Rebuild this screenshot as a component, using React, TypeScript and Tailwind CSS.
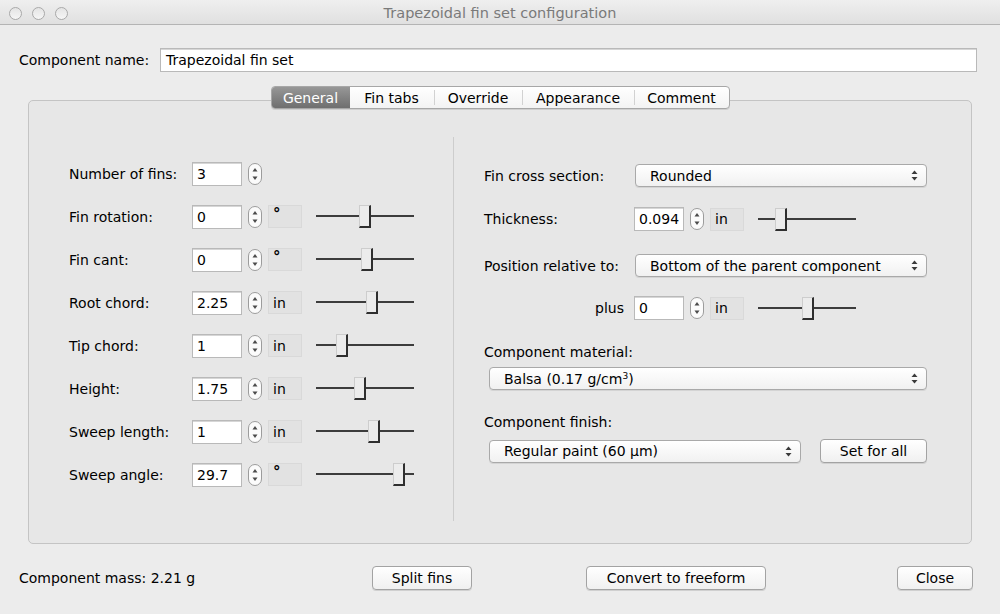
import React from "react";

const font = { fontFamily: '"DejaVu Sans", "Liberation Sans", sans-serif' };

type Row = { label: string; value: string; unit?: string; thumb?: number };

const finRows: Row[] = [
  { label: "Number of fins:", value: "3" },
  { label: "Fin rotation:", value: "0", unit: "°", thumb: 43 },
  { label: "Fin cant:", value: "0", unit: "°", thumb: 45 },
  { label: "Root chord:", value: "2.25", unit: "in", thumb: 50 },
  { label: "Tip chord:", value: "1", unit: "in", thumb: 20 },
  { label: "Height:", value: "1.75", unit: "in", thumb: 38 },
  { label: "Sweep length:", value: "1", unit: "in", thumb: 52 },
  { label: "Sweep angle:", value: "29.7", unit: "°", thumb: 77 },
];

const TextBox = ({ value, className = "" }: { value: string; className?: string }) => (
  <div
    className={`h-[24px] bg-white border border-[#b9b9b9] shadow-[inset_0_1px_0_#d6d6d6] flex items-center pl-[4px] pt-[1px] text-[14px] text-black ${className}`}
  >
    {value}
  </div>
);

const Spinner = () => (
  <svg width="14" height="22" viewBox="0 0 14 22" className="shrink-0">
    <rect x="0.5" y="0.5" width="13" height="21" rx="6.5" fill="#fbfbfb" stroke="#9c9c9c" />
    <path d="M7 5 L9.5 8.5 H4.5 Z" fill="#4a4a4a" />
    <path d="M7 17 L9.5 13.5 H4.5 Z" fill="#4a4a4a" />
  </svg>
);

const Unit = ({ unit }: { unit: string }) => (
  <div className="w-[34px] h-[23px] bg-[#e2e2e2] border border-[#d9d9d9] flex items-center pl-[4px] pt-[1px] text-[14px] text-black shrink-0">
    {unit === "°" ? <span className="text-[15px] -mt-[5px] font-bold">°</span> : unit}
  </div>
);

const Slider = ({ thumb }: { thumb: number }) => (
  <div className="relative w-[98px] h-[23px] shrink-0">
    <div className="absolute left-0 right-0 top-[10px] h-[2px] bg-[#3c3c3c]" />
    <div
      className="absolute top-0 w-[12px] h-[23px] bg-[#ececec] border-t border-l border-[#cdcdcd] border-r-2 border-b-2 border-r-[#2f2f2f] border-b-[#2f2f2f]"
      style={{ left: thumb }}
    />
  </div>
);

const Arrows = () => (
  <svg width="7" height="11" viewBox="0 0 7 11" className="shrink-0">
    <path d="M3.5 0.5 L6.5 4 H0.5 Z" fill="#3a3a3a" />
    <path d="M3.5 10.5 L6.5 7 H0.5 Z" fill="#3a3a3a" />
  </svg>
);

const Select = ({ value, className = "" }: { value: React.ReactNode; className?: string }) => (
  <div
    className={`h-[23px] rounded-[4px] border border-[#a9a9a9] bg-gradient-to-b from-white to-[#f1f1f1] shadow-[0_1px_0_#d4d4d4] flex items-center justify-between pl-[14px] pr-[8px] text-[14px] text-black ${className}`}
  >
    <span className="pt-[1px]">{value}</span>
    <Arrows />
  </div>
);

const Button = ({ label, className = "" }: { label: string; className?: string }) => (
  <div
    className={`h-[24px] rounded-[4px] border border-[#a3a3a3] bg-gradient-to-b from-white to-[#f0f0f0] shadow-[0_1px_0_#d0d0d0] flex items-center justify-center text-[14px] text-black ${className}`}
  >
    {label}
  </div>
);

const Light = () => (
  <div className="w-[13px] h-[13px] rounded-full border border-[#a9a9a9] bg-gradient-to-b from-[#e4e4e4] to-[#f6f6f6]" />
);

const tabs = [
  { name: "General", w: "w-[78px]" },
  { name: "Fin tabs", w: "w-[84px]" },
  { name: "Override", w: "w-[88px]" },
  { name: "Appearance", w: "w-[112px]" },
  { name: "Comment", w: "w-[95px]" },
];

export default function App() {
  return (
    <div className="w-[1000px] h-[614px] bg-[#ececec] flex flex-col overflow-hidden" style={font}>
      {/* title bar */}
      <div className="h-[25px] shrink-0 flex items-center pt-[2px] bg-gradient-to-b from-[#efefef] to-[#e0e0e0] border-b border-[#b4b4b4] relative">
        <div className="flex items-center gap-[10px] pl-[9px]">
          <Light />
          <Light />
          <Light />
        </div>
        <div className="absolute inset-0 flex items-center justify-center pt-[3px] text-[14.5px] text-[#7a7a7a]">
          Trapezoidal fin set configuration
        </div>
      </div>

      {/* component name */}
      <div className="flex items-center mt-[23px] pl-[19px] pr-[23px]">
        <span className="w-[141px] pt-[1px] text-[14px] text-black">Component name:</span>
        <TextBox value="Trapezoidal fin set" className="flex-1 pl-[5px]" />
      </div>

      {/* tabs */}
      <div className="relative z-10 flex justify-center mt-[14px]">
        <div className="flex h-[23px] rounded-[4px] border border-[#a7a7a7] bg-gradient-to-b from-white to-[#f3f3f3] overflow-hidden shadow-[0_1px_0_#cfcfcf]">
          {tabs.map((t, i) =>
            i === 0 ? (
              <div
                key={t.name}
                className={`${t.w} flex items-center justify-center pt-[1px] text-[14px] text-white bg-gradient-to-b from-[#979797] to-[#6f6f6f]`}
              >
                {t.name}
              </div>
            ) : (
              <div key={t.name} className={`${t.w} flex items-center`}>
                {i > 1 && <div className="w-px h-[15px] bg-[#d2d2d2]" />}
                <span className="flex-1 text-center pt-[1px] text-[14px] text-black">{t.name}</span>
              </div>
            )
          )}
        </div>
      </div>

      {/* panel */}
      <div className="mx-[28px] w-[944px] -mt-[9px] h-[444px] rounded-[5px] border border-[#c4c4c4] bg-[#e7e7e7] pt-[36px] shrink-0">
        <div className="flex h-[384px]">
          {/* left */}
          <div className="w-[424px] pl-[40px] pt-[15px]">
            {finRows.map((r) => (
              <div key={r.label} className="h-[43px] flex items-center">
                <span className="w-[123px] pt-[1px] text-[14px] text-black">{r.label}</span>
                <TextBox value={r.value} className="w-[50px] shrink-0" />
                <div className="ml-[6px]">
                  <Spinner />
                </div>
                {r.unit && (
                  <>
                    <div className="ml-[6px]">
                      <Unit unit={r.unit} />
                    </div>
                    <div className="ml-[14px]">
                      <Slider thumb={r.thumb ?? 0} />
                    </div>
                  </>
                )}
              </div>
            ))}
          </div>

          {/* right */}
          <div className="flex-1 border-l border-[#cdcdcd] pl-[30px] pr-[44px] flex flex-col text-[14px] text-black">
            <div className="mt-[27px] flex items-center">
              <span className="w-[151px] pt-[1px]">Fin cross section:</span>
              <Select value="Rounded" className="flex-1" />
            </div>
            <div className="mt-[20px] flex items-center">
              <span className="w-[150px] pt-[1px]">Thickness:</span>
              <TextBox value="0.094" className="w-[50px] shrink-0" />
              <div className="ml-[6px]">
                <Spinner />
              </div>
              <div className="ml-[6px]">
                <Unit unit="in" />
              </div>
              <div className="ml-[14px]">
                <Slider thumb={17} />
              </div>
            </div>
            <div className="mt-[23px] flex items-center">
              <span className="w-[151px] pt-[1px]">Position relative to:</span>
              <Select value="Bottom of the parent component" className="flex-1" />
            </div>
            <div className="mt-[19px] flex items-center">
              <span className="w-[150px] pt-[1px] text-right pr-[10px]">plus</span>
              <TextBox value="0" className="w-[50px] shrink-0" />
              <div className="ml-[6px]">
                <Spinner />
              </div>
              <div className="ml-[6px]">
                <Unit unit="in" />
              </div>
              <div className="ml-[14px]">
                <Slider thumb={44} />
              </div>
            </div>
            <div className="mt-[22px] h-[20px] leading-[20px]">Component material:</div>
            <Select
              value={
                <>
                  Balsa (0.17 g/cm<sup className="text-[9px]">3</sup>)
                </>
              }
              className="mt-[5px] ml-[5px]"
            />
            <div className="mt-[22px] h-[20px] leading-[20px]">Component finish:</div>
            <div className="mt-[7px] ml-[5px] flex items-center">
              <Select value="Regular paint (60 µm)" className="w-[312px]" />
              <Button label="Set for all" className="ml-[19px] flex-1" />
            </div>
          </div>
        </div>
      </div>

      {/* bottom */}
      <div className="mt-[22px] flex items-center pl-[19px] pr-[27px]">
        <span className="w-[353px] text-[14px] text-black">Component mass: 2.21 g</span>
        <Button label="Split fins" className="w-[100px]" />
        <Button label="Convert to freeform" className="w-[180px] ml-[114px]" />
        <Button label="Close" className="w-[76px] ml-auto" />
      </div>
    </div>
  );
}
